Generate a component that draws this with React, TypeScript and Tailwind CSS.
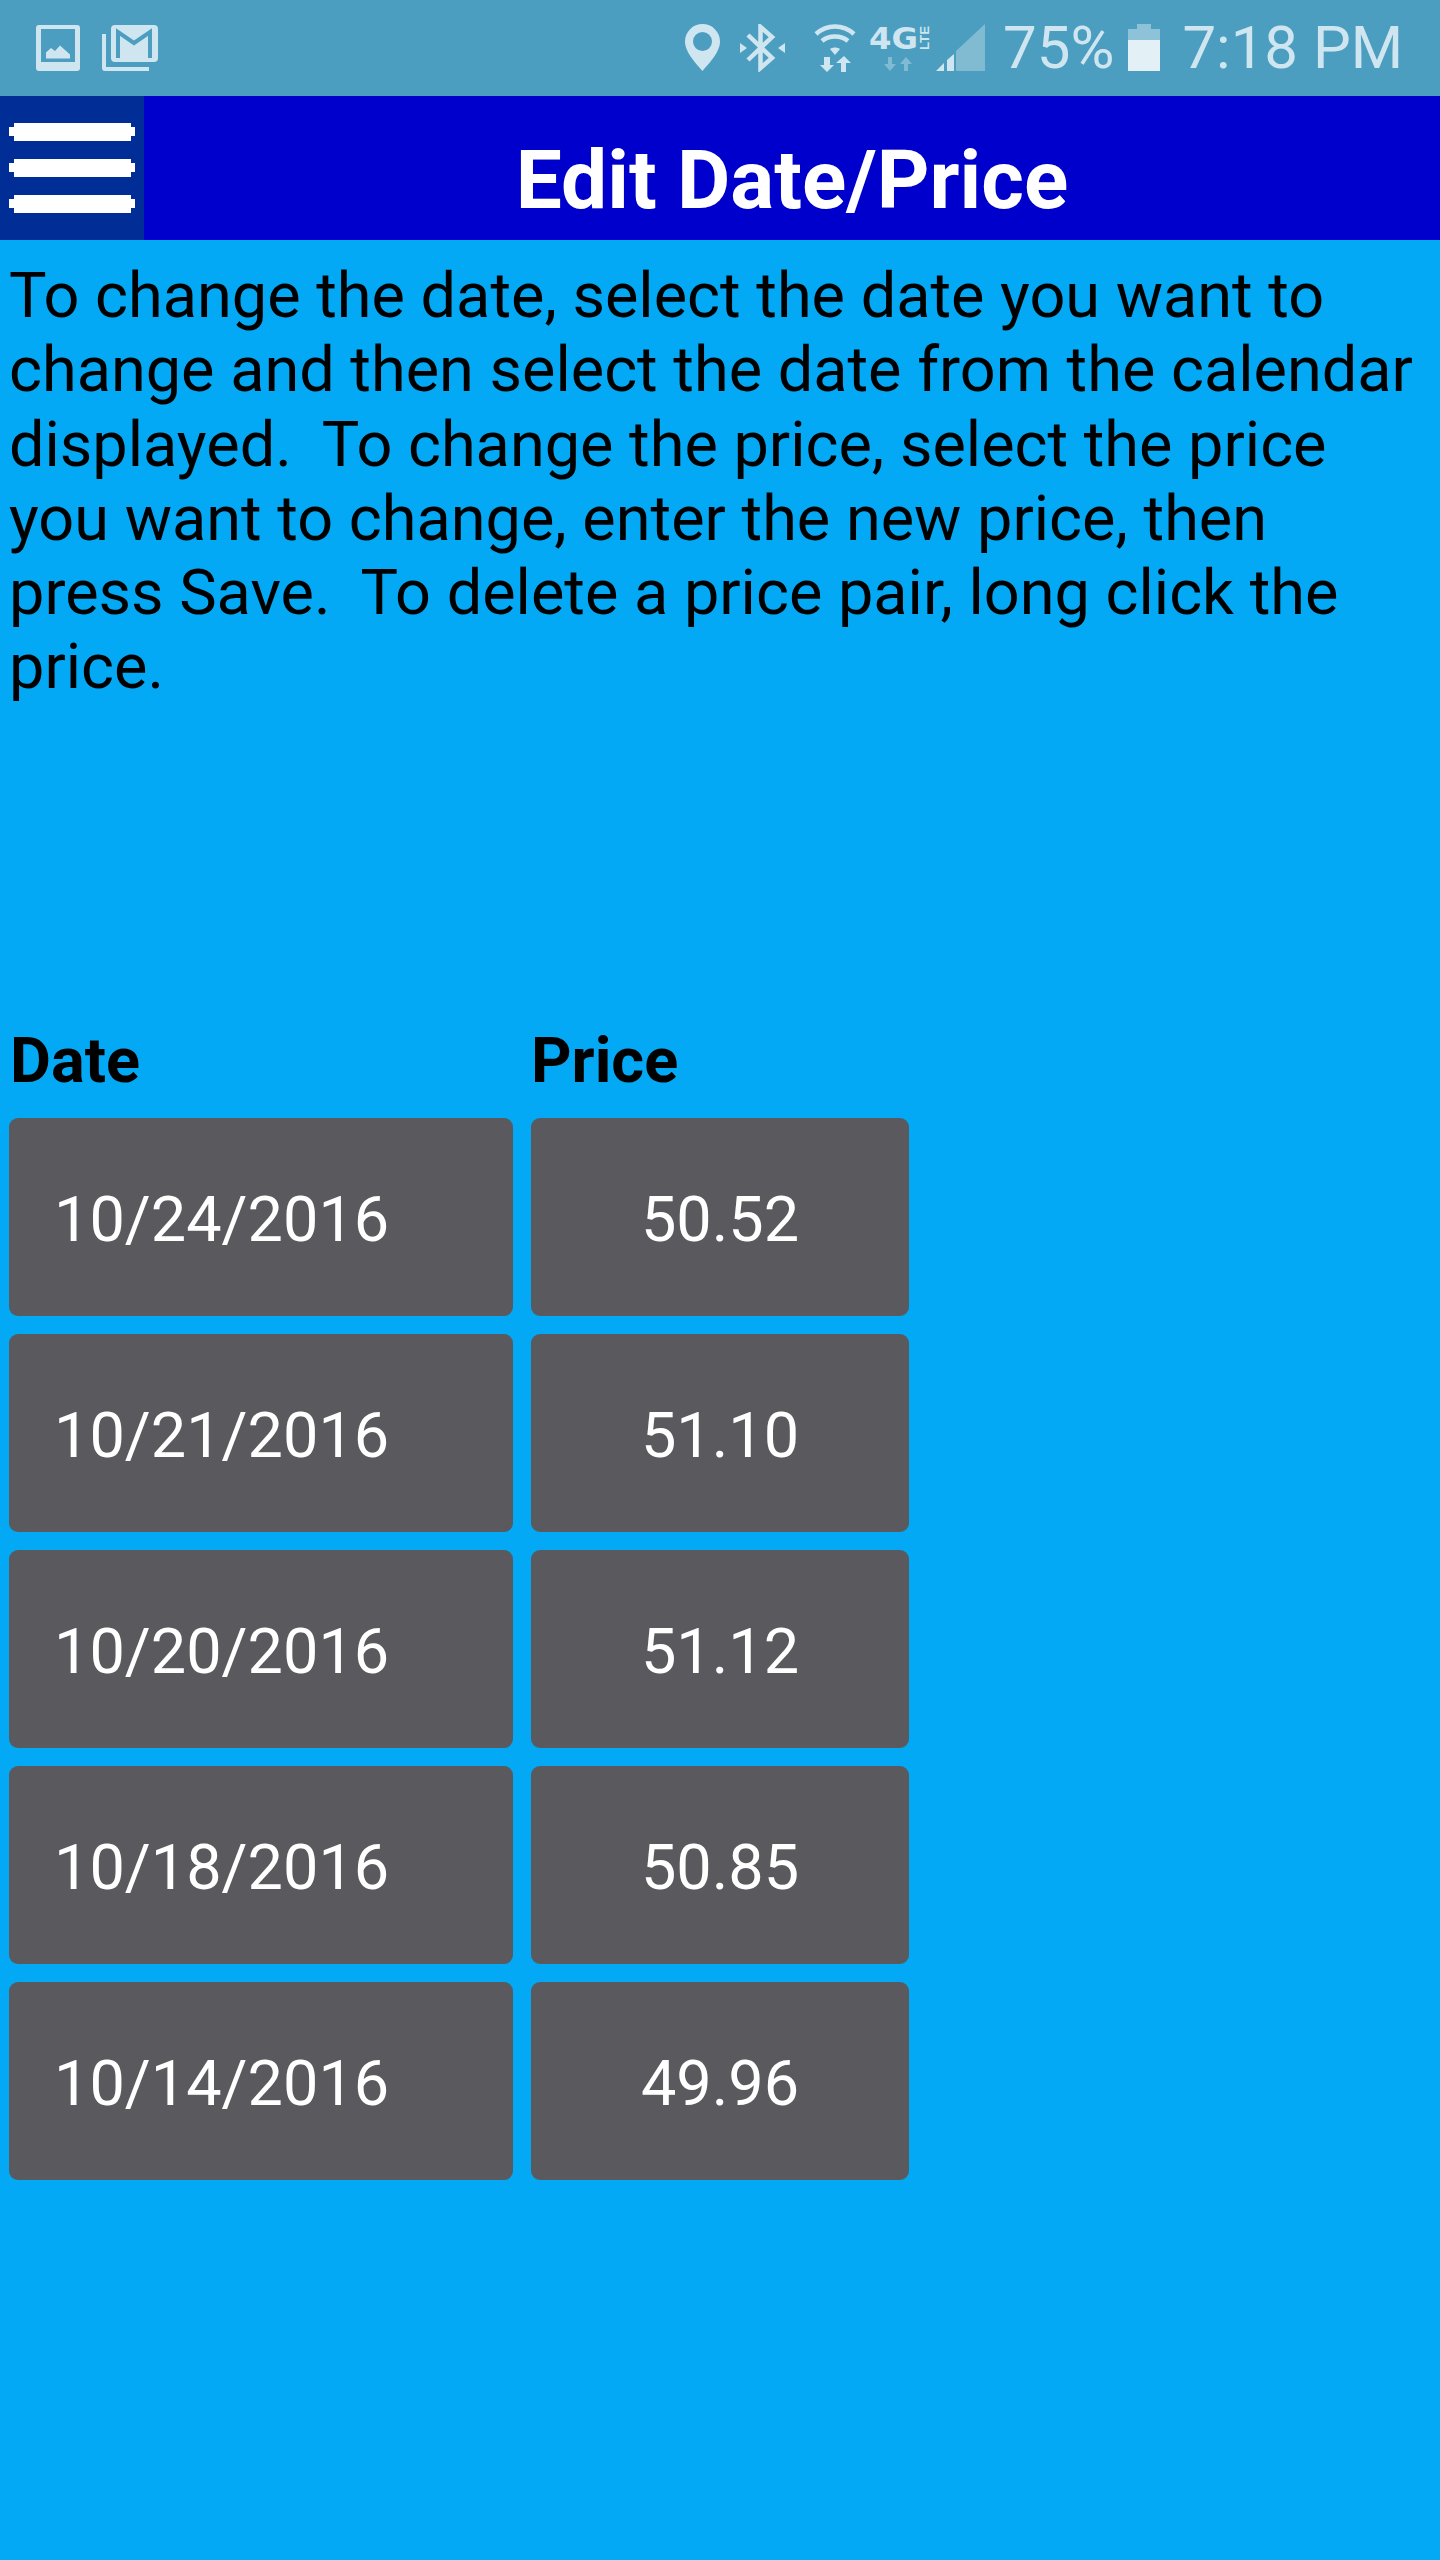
const ROWS = [
  { date: "10/24/2016", price: "50.52" },
  { date: "10/21/2016", price: "51.10" },
  { date: "10/20/2016", price: "51.12" },
  { date: "10/18/2016", price: "50.85" },
  { date: "10/14/2016", price: "49.96" },
];

function StatusBar() {
  return (
    <div className="flex h-[96px] items-center bg-[#4b9ebf] pl-[36px] text-[60px] leading-[96px] text-[#cfe6f1]">
      <svg viewBox="36 25 44 48" className="h-[48px] w-[44px] shrink-0" fill="#cfe6f1">
        <path
          fillRule="evenodd"
          d="M39 26h38a3 3 0 0 1 3 3v40a3 3 0 0 1-3 3H39a3 3 0 0 1-3-3V29a3 3 0 0 1 3-3zM41 30v33h34V30zM46 59.500v-6l5-4.500 4 3 5-5.500 10 9v4z"
        />
      </svg>
      <svg viewBox="102 25 57 48" className="ml-[22px] h-[48px] w-[57px] shrink-0">
        <path d="M104 35v34a1 1 0 0 0 1 1h44" fill="none" stroke="#cfe6f1" strokeWidth="4" />
        <rect x="111" y="26" width="47" height="37" rx="4" fill="#cfe6f1" />
        <path d="M118 59V33l16 11 16-11v26" fill="none" stroke="#4b9ebf" strokeWidth="4" />
      </svg>

      <svg viewBox="684 25 35 48" className="ml-[526px] h-[48px] w-[35px] shrink-0" fill="#cfe6f1">
        <path
          fillRule="evenodd"
          d="M701.500 25a17.500 17.500 0 0 1 17.500 17.500c0 11-12 23-17.500 29.500c-5.500-6.500-17.500-18.500-17.500-29.500a17.500 17.500 0 0 1 17.500-17.500zM701.500 33a9.500 9.500 0 1 0 0 19a9.500 9.500 0 0 0 0-19z"
        />
      </svg>
      <svg viewBox="739 25 45 48" className="ml-[20px] h-[48px] w-[45px] shrink-0">
        <path
          d="M747 36l24 23-11.500 10V28l11.500 10-24 23"
          fill="none"
          stroke="#cfe6f1"
          strokeWidth="4.500"
        />
        <path d="M739 44l7 5-7 5zM784 44l-7 5 7 5z" fill="#cfe6f1" />
      </svg>
      <svg viewBox="813 24 42 50" className="ml-[29px] h-[50px] w-[42px] shrink-0" fill="#cfe6f1">
        <path d="M815 35c11-10 27-10 38 0" fill="none" stroke="#cfe6f1" strokeWidth="4.500" />
        <path d="M821 42c7-6 19-6 26 0" fill="none" stroke="#cfe6f1" strokeWidth="4.500" />
        <path d="M829 50c3-2 7-2 10 0l-5 6z" />
        <path d="M823 58h6v8h4l-7 7-7-7h4zM840 73v-9h-5l8-7 7 7h-5v9z" />
      </svg>
      <svg viewBox="864 20 70 58" className="ml-[9px] h-[58px] w-[70px] shrink-0" fill="#cfe6f1">
        <text
          x="868"
          y="50"
          fontFamily="'DejaVu Sans', sans-serif"
          fontWeight="700"
          fontSize="30"
          textLength="49"
          lengthAdjust="spacingAndGlyphs"
        >
          4G
        </text>
        <text
          transform="translate(928 51) rotate(-90)"
          fontFamily="'Liberation Sans', sans-serif"
          fontWeight="700"
          fontSize="12"
          textLength="24"
          lengthAdjust="spacingAndGlyphs"
        >
          LTE
        </text>
        <path d="M887 58h4v7h4l-6 7-6-7h4zM903 72v-7h-4l6-7 6 7h-4v7z" opacity="0.4" />
      </svg>
      <svg viewBox="935 25 49 48" className="ml-px h-[48px] w-[49px] shrink-0" fill="#cfe6f1">
        <path d="M955 52l29-27v47h-29z" opacity="0.4" />
        <path d="M935 72l8-8v8zM946 61l7-6v17h-7z" />
      </svg>

      <span className="ml-[18px]">75%</span>
      <svg viewBox="1128 25 32 48" className="ml-[14px] h-[48px] w-[32px] shrink-0">
        <path d="M1137 25h14v5h9v11h-32V30h9z" fill="#cfe6f1" opacity="0.5" />
        <rect x="1128" y="41" width="32" height="31" fill="#e3f1f6" />
      </svg>
      <span className="ml-[22px]">7:18 PM</span>
    </div>
  );
}

function Header() {
  return (
    <div className="flex h-[144px] bg-[#0000cc]">
      <div className="flex w-[144px] shrink-0 items-center justify-center bg-[#002d96]">
        <svg viewBox="9 123 126 90" className="h-[90px] w-[126px]" fill="#ffffff">
          <path d="M14 123h117v4h4v9h-4v5H14v-5H9v-9h5z" />
          <path d="M14 159h117v4h4v9h-4v5H14v-5H9v-9h5z" />
          <path d="M14 195h117v4h4v9h-4v5H14v-5H9v-9h5z" />
        </svg>
      </div>
      <h1 className="flex-1 pt-[20px] text-center text-[82px] leading-[128px] font-bold text-white">
        Edit Date/Price
      </h1>
    </div>
  );
}

export default function App() {
  return (
    <div className="flex h-[2560px] w-[1440px] flex-col overflow-hidden bg-[#03a9f4] font-['Roboto',sans-serif] text-black">
      <StatusBar />
      <Header />
      <p className="h-[788px] pt-[19px] pl-[9px] text-[63px] leading-[74.300px] whitespace-pre">
        {"To change the date, select the date you want to\nchange and then select the date from the calendar\ndisplayed.  To change the price, select the price\nyou want to change, enter the new price, then\npress Save.  To delete a price pair, long click the\nprice."}
      </p>
      <div className="grid w-[909px] grid-cols-[504px_378px] gap-x-[18px] gap-y-[18px] pl-[9px]">
        <div className="pb-[6px] pl-px text-[63px] leading-[66px] font-bold">Date</div>
        <div className="pb-[6px] text-[63px] leading-[66px] font-bold">Price</div>
        {ROWS.map((row) => (
          <div key={row.date} className="contents text-[63px] text-white">
            <div className="flex h-[198px] items-center rounded-[9px] bg-[#5a5a5e] pt-[6px] pl-[45px]">{row.date}</div>
            <div className="flex h-[198px] items-center justify-center rounded-[9px] bg-[#5a5a5e] pt-[6px]">{row.price}</div>
          </div>
        ))}
      </div>
    </div>
  );
}
